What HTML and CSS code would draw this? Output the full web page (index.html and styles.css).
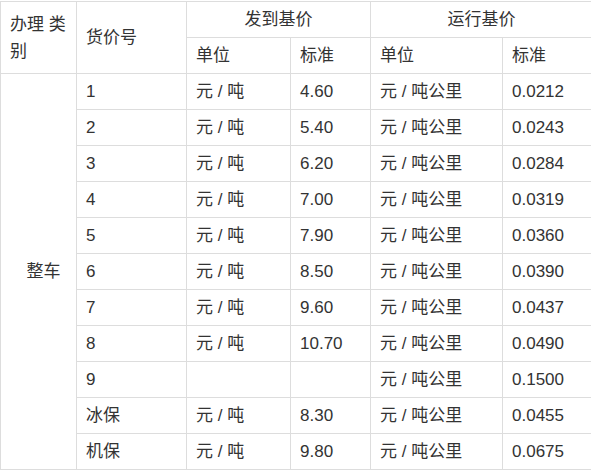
FILE: index.html
```html
<!DOCTYPE html>
<html lang="zh">
<head>
<meta charset="utf-8">
<link rel="stylesheet" href="styles.css">
</head>
<body>
<table class="price">
  <colgroup>
    <col class="c1"><col class="c2"><col class="c3"><col class="c4"><col class="c5"><col class="c6">
  </colgroup>
  <tr>
    <td rowspan="2">办理 类别</td>
    <td rowspan="2">货价号</td>
    <td colspan="2" class="center">发到基价</td>
    <td colspan="2" class="center">运行基价</td>
  </tr>
  <tr>
    <td>单位</td><td>标准</td><td>单位</td><td>标准</td>
  </tr>
  <tr>
    <td rowspan="11" class="kind">整车</td>
    <td>1</td><td>元 / 吨</td><td>4.60</td><td>元 / 吨公里</td><td>0.0212</td>
  </tr>
  <tr><td>2</td><td>元 / 吨</td><td>5.40</td><td>元 / 吨公里</td><td>0.0243</td></tr>
  <tr><td>3</td><td>元 / 吨</td><td>6.20</td><td>元 / 吨公里</td><td>0.0284</td></tr>
  <tr><td>4</td><td>元 / 吨</td><td>7.00</td><td>元 / 吨公里</td><td>0.0319</td></tr>
  <tr><td>5</td><td>元 / 吨</td><td>7.90</td><td>元 / 吨公里</td><td>0.0360</td></tr>
  <tr><td>6</td><td>元 / 吨</td><td>8.50</td><td>元 / 吨公里</td><td>0.0390</td></tr>
  <tr><td>7</td><td>元 / 吨</td><td>9.60</td><td>元 / 吨公里</td><td>0.0437</td></tr>
  <tr><td>8</td><td>元 / 吨</td><td>10.70</td><td>元 / 吨公里</td><td>0.0490</td></tr>
  <tr><td>9</td><td></td><td></td><td>元 / 吨公里</td><td>0.1500</td></tr>
  <tr><td>冰保</td><td>元 / 吨</td><td>8.30</td><td>元 / 吨公里</td><td>0.0455</td></tr>
  <tr><td>机保</td><td>元 / 吨</td><td>9.80</td><td>元 / 吨公里</td><td>0.0675</td></tr>
</table>
</body>
</html>
```

FILE: styles.css
```css
html, body {
  margin: 0;
  padding: 0;
  background: #fff;
}
body {
  padding-top: 1px;
  font-family: "Liberation Sans", Arial, "Noto Sans CJK SC", sans-serif;
  font-size: 17px;
  color: #333;
  overflow: hidden;
}
.price {
  border-collapse: collapse;
  table-layout: fixed;
  width: 592px;
}
.c1 { width: 76px; }
.c2 { width: 110px; }
.c3 { width: 104px; }
.c4 { width: 80px; }
.c5 { width: 132px; }
.c6 { width: 90px; }
.price td {
  border: 1px solid #ddd;
  padding: 4px 9px;
  line-height: 27px;
  text-align: left;
  vertical-align: middle;
}
.price td.center {
  text-align: center;
}
.price td.kind {
  text-align: center;
  padding: 4px 0 4px 10px;
}
```
